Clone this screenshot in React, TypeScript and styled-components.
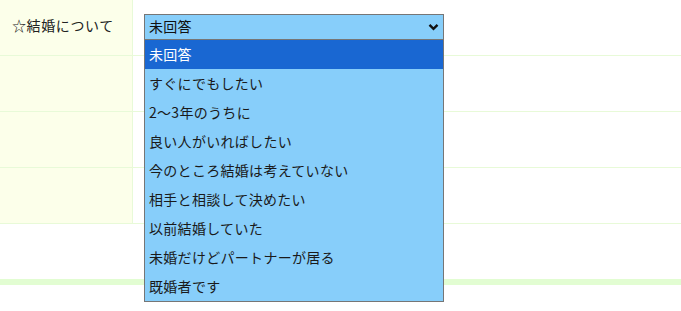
import React, { useState } from "react";
import styled, { createGlobalStyle } from "styled-components";

const options = [
  "未回答",
  "すぐにでもしたい",
  "2〜3年のうちに",
  "良い人がいればしたい",
  "今のところ結婚は考えていない",
  "相手と相談して決めたい",
  "以前結婚していた",
  "未婚だけどパートナーが居る",
  "既婚者です",
];

const GlobalStyle = createGlobalStyle`
  html, body {
    margin: 0;
    padding: 0;
    background: #ffffff;
    font-family: "Noto Sans CJK JP", "Noto Sans", sans-serif;
    color: #222222;
  }
`;

const Page = styled.div`
  position: relative;
  width: 681px;
  height: 311px;
  overflow: hidden;
`;

const Table = styled.div`
  display: flex;
  flex-direction: column;
`;

const Row = styled.div`
  display: grid;
  grid-template-columns: 133px 1fr;
  height: 55px;
  border-bottom: 1px solid #e8fad8;
`;

const LabelCell = styled.div`
  background: #fcffea;
  border-right: 1px solid #e8fad8;
  display: flex;
  align-items: center;
  padding-left: 12px;
  font-size: 14px;
  letter-spacing: 0.6px;
  padding-bottom: 5px;
`;

const FieldCell = styled.div`
  display: flex;
  align-items: center;
  padding-left: 11px;
  padding-bottom: 1px;
`;

const SelectBox = styled.div`
  position: relative;
  width: 300px;
  height: 26px;
  box-sizing: border-box;
  border: 1px solid #767676;
  background: #87cefa;
  display: flex;
  align-items: center;
  justify-content: space-between;
  padding: 0 4px 2px 4px;
  font-size: 14px;
  letter-spacing: 0.3px;
  color: #111;
`;

const Chevron = styled.svg`
  width: 11px;
  height: 8px;
  margin-top: 2px;
`;

const Dropdown = styled.ul`
  position: absolute;
  top: 24px;
  left: -1px;
  width: 300px;
  box-sizing: border-box;
  margin: 0;
  padding: 0;
  list-style: none;
  background: #87cefa;
  border: 1px solid #767676;
  z-index: 10;
`;

const Option = styled.li<{ $active: boolean }>`
  height: 29px;
  display: flex;
  align-items: center;
  padding: 0 0 2px 4px;
  box-sizing: border-box;
  font-size: 14px;
  letter-spacing: 0.3px;
  color: ${(p) => (p.$active ? "#ffffff" : "#1a1a1a")};
  background: ${(p) => (p.$active ? "#1967d2" : "transparent")};
`;

const Spacer = styled.div`
  height: 55px;
`;

const Bar = styled.div`
  height: 6px;
  background: #e2fdd2;
`;

export default function App() {
  const [selected] = useState(0);
  return (
    <Page>
      <GlobalStyle />
      <Table>
        <Row>
          <LabelCell>☆結婚について</LabelCell>
          <FieldCell>
            <SelectBox>
              <span>{options[selected]}</span>
              <Chevron viewBox="0 0 11 8">
                <path d="M1.5 1.8 L5.5 5.8 L9.5 1.8" fill="none" stroke="#111" strokeWidth="2.4" />
              </Chevron>
              <Dropdown>
                {options.map((o, i) => (
                  <Option key={o} $active={i === selected}>
                    {o}
                  </Option>
                ))}
              </Dropdown>
            </SelectBox>
          </FieldCell>
        </Row>
        <Row>
          <LabelCell />
          <FieldCell />
        </Row>
        <Row>
          <LabelCell />
          <FieldCell />
        </Row>
        <Row>
          <LabelCell />
          <FieldCell />
        </Row>
      </Table>
      <Spacer />
      <Bar />
    </Page>
  );
}
